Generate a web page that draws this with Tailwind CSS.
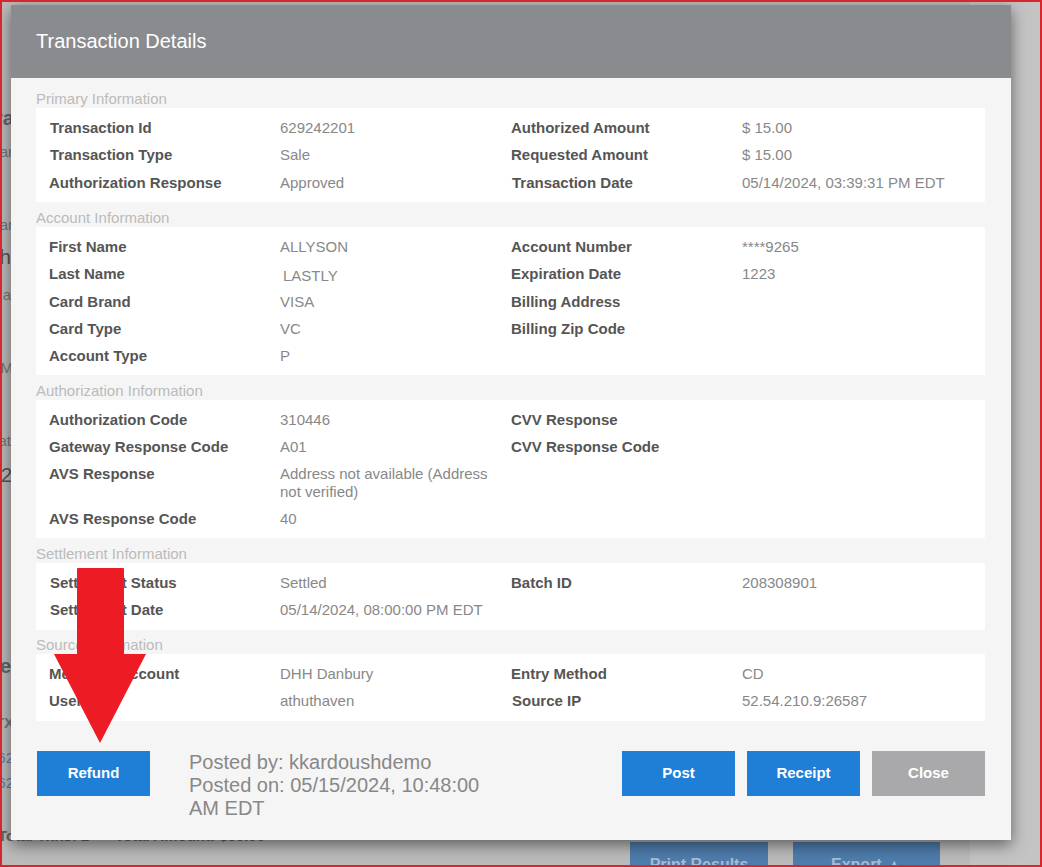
<!DOCTYPE html>
<html lang="en">

<head>
    <meta charset="UTF-8">
    <meta name="viewport" content="width=device-width, initial-scale=1.0">
    <title>Transaction Details</title>
    <script src="https://cdn.jsdelivr.net/npm/@tailwindcss/browser@4"></script>
</head>

<body class="bg-[#c4c4c5] font-['Liberation_Sans',Arial,sans-serif]">
    <div class="relative w-[1042px] h-[867px] overflow-hidden">
        <!-- Dimmed page behind the modal -->
        <div class="w-[970px] h-full bg-[#bcbcbd] flex flex-col text-[15px]">
            <div class="w-[11px] h-[829px] shrink-0 overflow-hidden flex flex-col items-end text-[#77777a] leading-5">
                <div class="mt-[106px] -mr-[3px] text-xl font-bold leading-6 whitespace-nowrap text-[#666]">Tra</div>
                <div class="mt-[12px] -mr-[2px] whitespace-nowrap">ar</div>
                <div class="mt-[53px] -mr-[2px] whitespace-nowrap">ar</div>
                <div class="mt-[10px] text-xl leading-6 whitespace-nowrap text-[#555]">th</div>
                <div class="mt-[16px] whitespace-nowrap">a</div>
                <div class="mt-[53px] -mr-[2px] whitespace-nowrap">M</div>
                <div class="mt-[53px] whitespace-nowrap">at</div>
                <div class="mt-[12px] -mr-[1px] text-xl leading-6 whitespace-nowrap text-[#555]">2</div>
                <div class="mt-[167px] text-xl font-bold leading-6 whitespace-nowrap text-[#666]">e</div>
                <div class="mt-[35px] -mr-[3px] font-bold whitespace-nowrap">TX</div>
                <div class="mt-[15px] -mr-[3px] whitespace-nowrap text-[#5b7fae]">62</div>
                <div class="mt-[5px] -mr-[3px] whitespace-nowrap text-[#5b7fae]">62</div>
            </div>
            <div class="h-[13px] shrink-0 flex font-bold text-[#666] leading-[14px] -ml-[2px]">
                <div class="w-[117px]">Total Txns: 2</div>
                <div>Total Amount: $30.00</div>
            </div>
            <div class="h-[25px] shrink-0 flex items-start">
                <div class="w-[630px] shrink-0 font-bold text-[#77777a] pl-[37px] pt-[20px] leading-5 h-[25px] overflow-hidden">Auth</div>
                <div class="w-[138px] h-[25px] shrink-0 bg-[#4f7dad] text-[#a9bdd2] font-bold text-base text-center pt-[11px] overflow-hidden">Print Results</div>
                <div class="w-[25px] shrink-0"></div>
                <div class="w-[147px] h-[25px] shrink-0 bg-[#4f7dad] text-[#a9bdd2] font-bold text-base text-center pt-[11px] overflow-hidden">Export ▲</div>
            </div>
        </div>

        <!-- Modal -->
        <div class="absolute left-[11px] top-[5px] w-[1000px] h-[835px] bg-[#f5f5f5] shadow-[0_5px_15px_rgba(0,0,0,0.5)]">
            <div class="h-[73px] bg-[#8a8b8f] pl-[25px] pb-[2px] flex items-center">
                <h1 class="text-xl text-white">Transaction Details</h1>
            </div>

            <div class="pt-[5px] pl-[25px] pr-[26px] text-[15px]">
                <h2 class="h-[25px] leading-[31px] text-[#bbbbbb]">Primary Information</h2>
                <div class="bg-white pt-[6.3px] pb-[5.2px] pl-[13px] grid grid-cols-[231px_231px_231px_231px] auto-rows-[27.5px] items-center">
                    <div class="font-bold text-[#555] ml-px">Transaction Id</div>
                    <div class="text-[#888]">629242201</div>
                    <div class="font-bold text-[#555]">Authorized Amount</div>
                    <div class="text-[#888]">$ 15.00</div>
                    <div class="font-bold text-[#555] ml-px">Transaction Type</div>
                    <div class="text-[#888]">Sale</div>
                    <div class="font-bold text-[#555]">Requested Amount</div>
                    <div class="text-[#888]">$ 15.00</div>
                    <div class="font-bold text-[#555]">Authorization Response</div>
                    <div class="text-[#888]">Approved</div>
                    <div class="font-bold text-[#555] ml-px">Transaction Date</div>
                    <div class="text-[#888]">05/14/2024, 03:39:31 PM EDT</div>
                </div>

                <h2 class="h-[25px] leading-[31px] text-[#bbbbbb]">Account Information</h2>
                <div class="bg-white pt-[6.4px] pb-[4.6px] pl-[13px] grid grid-cols-[231px_231px_231px_231px] auto-rows-[27.4px] items-center">
                    <div class="font-bold text-[#555]">First Name</div>
                    <div class="text-[#888]">ALLYSON</div>
                    <div class="font-bold text-[#555]">Account Number</div>
                    <div class="text-[#888]">****9265</div>
                    <div class="font-bold text-[#555]">Last Name</div>
                    <div class="text-[#888] ml-[3px] mt-[3px]">LASTLY</div>
                    <div class="font-bold text-[#555]">Expiration Date</div>
                    <div class="text-[#888]">1223</div>
                    <div class="font-bold text-[#555]">Card Brand</div>
                    <div class="text-[#888]">VISA</div>
                    <div class="font-bold text-[#555]">Billing Address</div>
                    <div></div>
                    <div class="font-bold text-[#555]">Card Type</div>
                    <div class="text-[#888]">VC</div>
                    <div class="font-bold text-[#555]">Billing Zip Code</div>
                    <div></div>
                    <div class="font-bold text-[#555]">Account Type</div>
                    <div class="text-[#888]">P</div>
                </div>

                <h2 class="h-[25px] leading-[31px] text-[#bbbbbb]">Authorization Information</h2>
                <div class="bg-white pt-[7px] pb-[5px] pl-[13px] grid grid-cols-[231px_231px_231px_231px] grid-rows-[27px_27px_45px_27px] items-center">
                    <div class="font-bold text-[#555]">Authorization Code</div>
                    <div class="text-[#888]">310446</div>
                    <div class="font-bold text-[#555]">CVV Response</div>
                    <div></div>
                    <div class="font-bold text-[#555]">Gateway Response Code</div>
                    <div class="text-[#888]">A01</div>
                    <div class="font-bold text-[#555]">CVV Response Code</div>
                    <div></div>
                    <div class="font-bold text-[#555] self-start pt-[3px] leading-5">AVS Response</div>
                    <div class="text-[#888] self-start pt-[4px] leading-[18px] pr-4">Address not available (Address not verified)</div>
                    <div></div>
                    <div></div>
                    <div class="font-bold text-[#555]">AVS Response Code</div>
                    <div class="text-[#888]">40</div>
                </div>

                <h2 class="h-[25px] leading-[31px] text-[#bbbbbb]">Settlement Information</h2>
                <div class="bg-white pt-[7px] pb-[6px] pl-[13px] grid grid-cols-[231px_231px_231px_231px] auto-rows-[27px] items-center">
                    <div class="font-bold text-[#555] ml-px">Settlement Status</div>
                    <div class="text-[#888]">Settled</div>
                    <div class="font-bold text-[#555]">Batch ID</div>
                    <div class="text-[#888]">208308901</div>
                    <div class="font-bold text-[#555] ml-px">Settlement Date</div>
                    <div class="text-[#888]">05/14/2024, 08:00:00 PM EDT</div>
                </div>

                <h2 class="h-[24px] leading-[29px] text-[#bbbbbb]">Source Information</h2>
                <div class="bg-white pt-[7px] pb-[6px] pl-[13px] grid grid-cols-[231px_231px_231px_231px] auto-rows-[27px] items-center">
                    <div class="font-bold text-[#555]">Merchant Account</div>
                    <div class="text-[#888]">DHH Danbury</div>
                    <div class="font-bold text-[#555]">Entry Method</div>
                    <div class="text-[#888]">CD</div>
                    <div class="font-bold text-[#555]">User</div>
                    <div class="text-[#888]">athuthaven</div>
                    <div class="font-bold text-[#555] ml-px">Source IP</div>
                    <div class="text-[#888]">52.54.210.9:26587</div>
                </div>

                <div class="flex items-start pt-[30px] pl-px">
                    <button class="w-[113px] h-[45px] bg-[#1f7fd6] text-white font-bold">Refund</button>
                    <div class="w-[312px] ml-[39px] text-xl leading-[23px] text-[#888]">
                        <p>Posted by: kkardoushdemo</p>
                        <p>Posted on: 05/15/2024, 10:48:00 AM EDT</p>
                    </div>
                    <div class="ml-auto flex gap-3">
                        <button class="w-[113px] h-[45px] bg-[#1f7fd6] text-white font-bold">Post</button>
                        <button class="w-[113px] h-[45px] bg-[#1f7fd6] text-white font-bold">Receipt</button>
                        <button class="w-[113px] h-[45px] bg-[#a9a9ab] text-white font-bold">Close</button>
                    </div>
                </div>
            </div>
        </div>

        <!-- Red annotation arrow -->
        <svg class="absolute left-[54px] top-[568px]" width="92" height="175" viewBox="0 0 92 175">
            <path d="M23 1 Q23 0 24 0 H69 Q70 0 70 1 V86 H92 L46 175 L0 86 H23 Z" fill="#ed1c24" />
        </svg>

        <!-- Screenshot frame -->
        <div class="absolute inset-0 border-2 border-[#d8262c] pointer-events-none"></div>
    </div>
</body>

</html>
